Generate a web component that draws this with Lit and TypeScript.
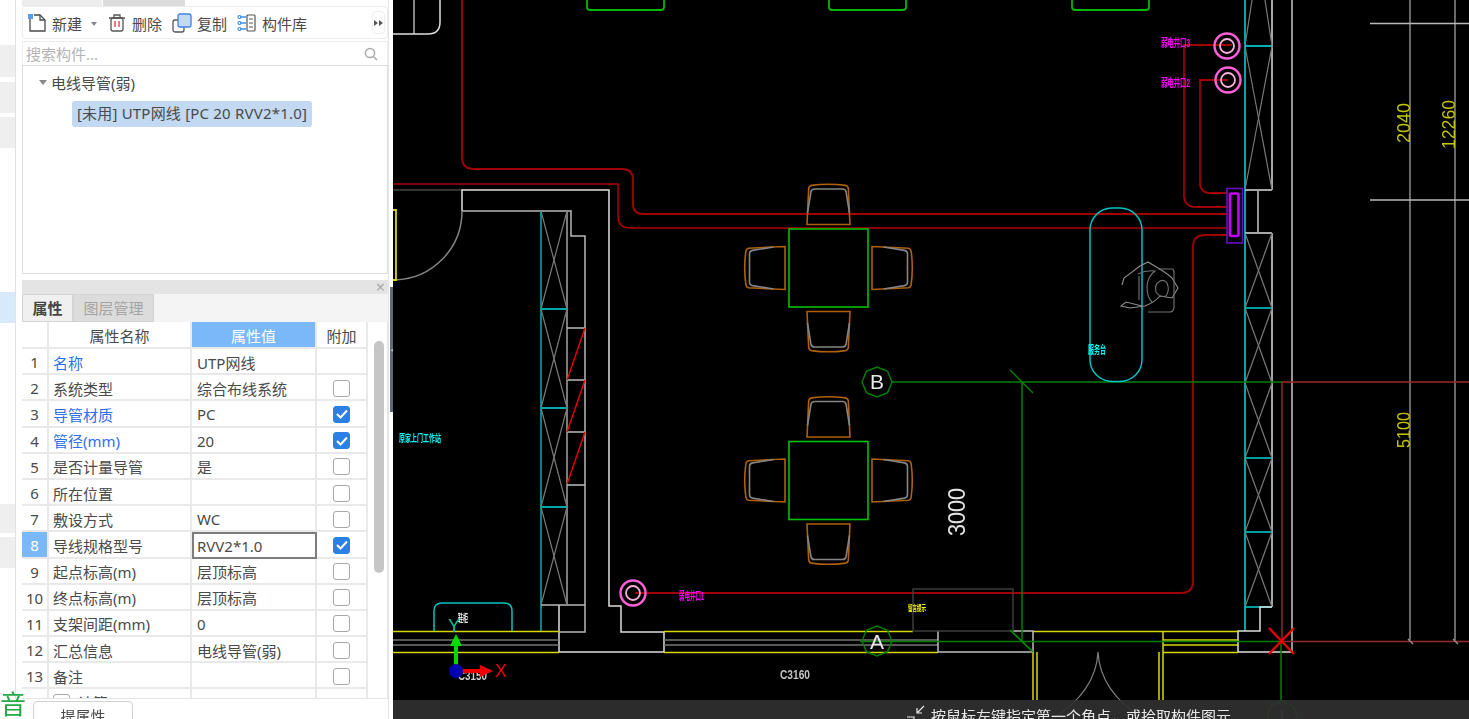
import { LitElement, html, css, svg } from 'lit';
import { customElement } from 'lit/decorators.js';
import { classMap } from 'lit/directives/class-map.js';

const rows = [
  { name: '名称', value: 'UTP网线', link: true, check: null },
  { name: '系统类型', value: '综合布线系统', check: false },
  { name: '导管材质', value: 'PC', link: true, check: true },
  { name: '管径(mm)', value: '20', link: true, check: true },
  { name: '是否计量导管', value: '是', check: false },
  { name: '所在位置', value: '', check: false },
  { name: '敷设方式', value: 'WC', check: false },
  { name: '导线规格型号', value: 'RVV2*1.0', active: true, check: true },
  { name: '起点标高(m)', value: '层顶标高', check: false },
  { name: '终点标高(m)', value: '层顶标高', check: false },
  { name: '支架间距(mm)', value: '0', check: false },
  { name: '汇总信息', value: '电线导管(弱)', check: false },
  { name: '备注', value: '', check: false },
];

const WHITE = '#dedede';
const RED = '#a00000';
const YELLOW = '#d8d800';
const TEAL = '#00dcdc';
const GREEN = '#008000';

const line = (x1: number, y1: number, x2: number, y2: number, c: string, w = 1.5) =>
  svg`<line x1=${x1} y1=${y1} x2=${x2} y2=${y2} stroke=${c} stroke-width=${w}></line>`;

const path = (d: string, c: string, w = 1.5) =>
  svg`<path d=${d} fill="none" stroke=${c} stroke-width=${w}></path>`;

// window bay with its diagonal cross
const bay = (x1: number, x2: number, y1: number, y2: number) => svg`
  ${line(x1, y1, x2, y2, '#7a7a7a', 1.2)}
  ${line(x2, y1, x1, y2, '#7a7a7a', 1.2)}
`;

const chair = (cx: number, cy: number, deg: number) => svg`
  <g transform="translate(${cx} ${cy}) rotate(${deg})">
    ${path('M-21.5 -43.5H21.5L19.8 -80Q19.4 -82 17 -82.6Q0 -85 -17 -82.6Q-19.4 -82 -19.8 -80Z', '#b06008', 1.6)}
    ${path('M-21 -55L-17.6 -76Q-17 -79 -14 -79H14Q17 -79 17.6 -76L21 -55', '#858585', 1.6)}
  </g>
`;

const table = (cx: number, cy: number) => svg`
  <rect x=${cx - 39.5} y=${cy - 39} width="79" height="78" fill="none" stroke="#00c000" stroke-width="1.6"></rect>
  ${[0, 90, 180, 270].map((d) => chair(cx, cy, d))}
`;

const socket = (cx: number, cy: number) => svg`
  <circle cx=${cx} cy=${cy} r="12.5" fill="none" stroke="#ff5fd8" stroke-width="2.4"></circle>
  <circle cx=${cx} cy=${cy} r="7" fill="none" stroke="#f6b0dc" stroke-width="1.8"></circle>
`;

const label = (x: number, y: number, t: string, c: string, len: number, size = 10) => svg`
  <text x=${x} y=${y} fill=${c} font-size=${size} font-weight="700" textLength=${len} lengthAdjust="spacingAndGlyphs" class="cad">${t}</text>
`;

const dim = (x: number, y: number, t: string, c: string, size: number, len: number) => svg`
  <text transform="translate(${x} ${y}) rotate(-90)" fill=${c} font-size=${size} textLength=${len} lengthAdjust="spacingAndGlyphs" class="cad">${t}</text>
`;

const octagon = (cx: number, cy: number, r: number) => {
  const pts = [...Array(8)].map((_, i) => {
    const a = (Math.PI / 4) * i;
    return `${cx + r * Math.cos(a)},${cy + r * Math.sin(a)}`;
  });
  return svg`<polygon points=${pts.join(' ')} fill="none" stroke="#008000" stroke-width="1.4"></polygon>`;
};

@customElement('app-root')
export class AppRoot extends LitElement {
  static styles = css`
    :host {
      display: block;
      width: 1469px;
      height: 719px;
      overflow: hidden;
      font-family: 'Noto Sans', 'Noto Sans CJK SC', sans-serif;
      font-size: 15px;
      color: #4a4a4a;
    }
    .shell {
      display: grid;
      grid-template-columns: 393px 1fr;
      height: 719px;
      filter: blur(0.4px);
    }
    .side {
      position: relative;
      display: grid;
      grid-template-columns: 16px 372px 5px;
      grid-template-rows: 699px 20px;
      background: #fff;
    }

    .rail {
      display: flex;
      flex-direction: column;
      border-right: 1px solid #e2e2e2;
    }
    .rail div {
      flex: none;
    }
    .rail .g {
      background: #efefef;
    }

    .panel {
      padding-left: 6px;
      display: flex;
      flex-direction: column;
      min-width: 0;
    }
    .top-tabs {
      height: 6px;
      display: flex;
      gap: 1px;
      flex: none;
    }
    .top-tabs i {
      width: 80px;
      background: #ededed;
    }
    .top-tabs i + i {
      width: 82px;
      background: #dcdcdc;
    }
    .toolbar {
      flex: none;
      height: 33px;
      display: flex;
      align-items: center;
      border: 1px solid #ececec;
      border-radius: 4px;
      box-sizing: border-box;
      padding-left: 4px;
      white-space: nowrap;
    }
    .toolbar svg {
      flex: none;
    }
    .toolbar span {
      margin-left: 5px;
      padding-top: 2px;
      width: 30px;
    }
    .toolbar span.gap {
      margin-right: 10px;
    }
    .toolbar span.trash {
      margin-left: 6px;
    }
    .toolbar span.wide {
      width: 45px;
    }
    .caret {
      width: 0;
      height: 0;
      margin: 2px 11px 0 9px;
      border: 3px solid transparent;
      border-top: 4px solid #888;
      border-bottom: 0;
    }
    .more {
      margin-left: auto;
      margin-right: 2px;
      width: 13px;
      height: 23px;
      border: 1px solid #eee;
      border-radius: 4px;
      display: flex;
      align-items: center;
      justify-content: center;
      box-sizing: border-box;
    }
    .search {
      flex: none;
      margin-top: 2px;
      height: 24px;
      display: flex;
      align-items: center;
      justify-content: space-between;
      padding: 0 9px 0 3px;
      border: 1px solid #ededed;
      border-bottom: 0;
      color: #b4b4b4;
      box-sizing: border-box;
    }
    .tree {
      flex: none;
      height: 209px;
      box-sizing: border-box;
      border: 1px solid #dedede;
      padding: 4px 0 0 16px;
    }
    .node {
      display: flex;
      align-items: center;
      height: 24px;
      gap: 4px;
    }
    .node b {
      width: 0;
      height: 0;
      border: 4.5px solid transparent;
      border-top: 5px solid #888;
      border-bottom: 0;
    }
    .picked {
      margin: 7px 0 0 33px;
      width: 240px;
      height: 26px;
      line-height: 25px;
      border-radius: 3px;
      background: #c2d9f1;
      text-align: center;
      white-space: nowrap;
      letter-spacing: 0.2px;
    }
    .prop-head {
      flex: none;
      margin-top: 6px;
      height: 14px;
      background: #e4e4e4;
      color: #a8a8a8;
      font-size: 16px;
      line-height: 14px;
      text-align: right;
      padding-right: 3px;
    }
    .prop-tabs {
      flex: none;
      height: 28px;
      display: flex;
      box-sizing: border-box;
      background: #f4f4f4;
    }
    .prop-tabs div {
      width: 51px;
      line-height: 27px;
      text-align: center;
      background: #f0f0f0;
      border: 1px solid #d4d4d4;
      font-weight: 700;
      color: #444;
      box-sizing: border-box;
    }
    .prop-tabs div + div {
      width: 81px;
      background: #dcdcdc;
      color: #a4a4a4;
      font-weight: 400;
    }
    .props {
      flex: 1;
      min-height: 0;
      overflow: hidden;
      display: grid;
      grid-template-columns: 346px 20px;
      border-right: 1px solid #e4e4e4;
      border-bottom: 1px solid #e4e4e4;
    }
    .sheet {
      display: grid;
      grid-template-columns: 27px 143px 125px 51px;
      grid-template-rows: 27px;
      grid-auto-rows: 26.2px;
      overflow: hidden;
    }
    .cell {
      display: flex;
      align-items: center;
      padding: 2px 0 0 4px;
      box-sizing: border-box;
      border-right: 2px solid #e9e9e9;
      border-bottom: 2px solid #e9e9e9;
      white-space: nowrap;
    }
    .cell.val {
      padding-left: 5px;
    }
    .cell.num,
    .cell.add,
    .cell.hd {
      justify-content: center;
      padding: 2px 0 0;
    }
    .cell.sel {
      background: #7ab8f9;
      color: #fff;
    }
    .cell.link {
      color: #2f6fe8;
    }
    .cell.edit {
      border: 2px solid #7d7d7d;
      background: #fff;
      padding-left: 3px;
    }
    .box {
      width: 17px;
      height: 17px;
      box-sizing: border-box;
      border: 1.5px solid #a8a8a8;
      border-radius: 3px;
      display: flex;
      align-items: center;
      justify-content: center;
    }
    .box.on {
      background: #2c7fe4;
      border-color: #2c7fe4;
    }
    .track {
      padding: 19px 0 0 6px;
    }
    .thumb {
      width: 10px;
      height: 232px;
      border-radius: 5px;
      background: #c6c6c6;
    }
    .splitter {
      grid-row: 1 / 3;
      grid-column: 3;
      padding-top: 287px;
      border-left: 1px solid #e6e6e6;
      box-sizing: border-box;
    }
    .grip {
      height: 125px;
      background: #5f6b78;
      margin-left: 1px;
      display: flex;
      align-items: center;
      color: #b8bec4;
      font-size: 8px;
    }
    .foot {
      grid-column: 1 / 3;
      display: flex;
      overflow: hidden;
    }
    .voice {
      position: absolute;
      left: 0;
      top: 689px;
      color: #25a845;
      font-size: 26px;
      line-height: 30px;
    }
    .btn {
      margin: 2px 0 0 33px;
      width: 100px;
      height: 30px;
      box-sizing: border-box;
      border: 1px solid #d2d2d2;
      border-radius: 4px;
      text-align: center;
      line-height: 29px;
    }

    .canvas {
      position: relative;
      background: #000;
      overflow: hidden;
    }
    .canvas > svg {
      display: block;
      width: 1076px;
      height: 719px;
    }
    .cad {
      font-family: 'Liberation Sans', 'Noto Sans CJK SC', sans-serif;
    }
    .status {
      position: absolute;
      left: 0;
      right: 0;
      bottom: 0;
      height: 19px;
      background: rgba(48, 48, 48, 0.92);
      color: #e8e8e8;
      font-size: 15px;
      overflow: hidden;
      display: flex;
      padding-left: 513px;
      gap: 5px;
      line-height: 20px;
      white-space: nowrap;
    }
    .status span {
      padding-top: 6px;
    }
    .status svg {
      flex: none;
      margin-top: 5px;
    }
  `;

  private toolbar() {
    return html`
      <div class="toolbar">
        <svg width="20" height="20" viewBox="0 0 20 20" fill="none" stroke="#4a4a4a" stroke-width="1.3">
          <path d="M3 5V18H18V7L13 2H7" />
          <path d="M13 2V7H18" />
          <rect x="1" y="1" width="5" height="5" fill="#5a9cf0" stroke="none" />
        </svg>
        <span>新建</span>
        <i class="caret"></i>
        <svg width="18" height="20" viewBox="0 0 18 20" fill="none" stroke="#555" stroke-width="1.3">
          <path d="M1 5H17M6 5V2H12V5" />
          <rect x="3" y="5" width="12" height="13" rx="2" />
          <path d="M7 8V14M11 8V14" stroke="#e8504a" stroke-width="1.5" />
        </svg>
        <span class="trash gap">删除</span>
        <svg width="20" height="20" viewBox="0 0 20 20" fill="none" stroke="#555" stroke-width="1.3">
          <rect x="1" y="7" width="11" height="12" rx="2" />
          <rect x="6" y="1" width="13" height="13" rx="2" fill="#c2d9f6" stroke="#3f82e0" />
        </svg>
        <span class="gap">复制</span>
        <svg width="20" height="20" viewBox="0 0 20 20" fill="none" stroke="#555" stroke-width="1.2">
          <rect x="10" y="2" width="8" height="16" rx="1" />
          <path d="M12 6H16M12 10H16M12 14H16" />
          <path d="M3 4H9M3 10H9M3 16H9" stroke="#3f90e8" stroke-width="1.3" />
          <circle cx="2.5" cy="4" r="1.5" stroke="#3f90e8" />
          <circle cx="2.5" cy="10" r="1.5" stroke="#3f90e8" />
          <circle cx="2.5" cy="16" r="1.5" stroke="#3f90e8" />
        </svg>
        <span class="wide">构件库</span>
        <div class="more">
          <svg width="9" height="6" viewBox="0 0 9 6" fill="#555">
            <path d="M0 0L4 3L0 6ZM5 0L9 3L5 6Z" />
          </svg>
        </div>
      </div>
    `;
  }

  private sheet() {
    return html`
      <div class="sheet">
        <div class="cell hd"></div>
        <div class="cell hd">属性名称</div>
        <div class="cell hd sel">属性值</div>
        <div class="cell hd">附加</div>
        ${rows.map(
          (r, i) => html`
            <div class="cell num ${classMap({ sel: !!r.active })}">${i + 1}</div>
            <div class="cell ${classMap({ link: !!r.link })}">${r.name}</div>
            <div class="cell val ${classMap({ edit: !!r.active })}">${r.value}</div>
            <div class="cell add">
              ${r.check === null
                ? ''
                : html`<div class="box ${classMap({ on: !!r.check })}">
                    ${r.check
                      ? html`<svg width="12" height="10" viewBox="0 0 12 10" fill="none" stroke="#fff" stroke-width="2">
                          <path d="M1 5L4.5 8.5L11 1.5" />
                        </svg>`
                      : ''}
                  </div>`}
            </div>
          `
        )}
        <div class="cell num"></div>
        <div class="cell"><div class="box"></div>&nbsp;&nbsp;计算</div>
        <div class="cell"></div>
        <div class="cell add"></div>
      </div>
    `;
  }

  private drawing() {
    return svg`
      <!-- top-left door + furniture -->
      ${path('M393 34H428Q440 34 440 22V0', WHITE)}
      ${line(414, 0, 414, 34, WHITE, 1.2)}
      ${[587, 829, 1072].map((x) => path(`M${x} 0V7Q${x} 10 ${x + 3} 10H${x + 74}Q${x + 77} 10 ${x + 77} 7V0`, '#00b800', 1.8))}

      <!-- red conduits -->
      ${path('M462 0V157Q462 169 474 169H622Q633 169 633 180V204Q633 214 643 214H1227', RED, 1.9)}
      ${path('M393 184H618V216Q618 228 630 228H1227', '#b00000', 1.5)}
      ${path('M1232 45H1184V195Q1184 207 1196 207H1227', RED, 1.8)}
      ${path('M1228 80H1200V183Q1200 193 1210 193H1227', RED, 1.8)}
      ${path('M1227 235H1205Q1193 235 1193 247V581Q1193 593 1181 593H635', RED, 1.9)}

      <!-- left wall -->
      ${line(393, 190, 462, 190, '#666', 1.2)}
      ${path('M462 211V190H609V606H621V632H664V652H559V605', WHITE)}
      ${path('M462 211H571V236H585V632H559', '#b8b8b8')}
      ${path('M462 211A69 69 0 0 1 395 280', '#858585')}
      ${path('M393 210H396V280H393', YELLOW, 1.8)}
      ${line(541, 211, 541, 632, '#00b0b8')}
      ${line(567, 211, 567, 605, '#a4a4a4')}
      ${line(541, 605, 585, 605, '#b8b8b8')}
      ${[[211, 309], [309, 408], [408, 507], [507, 605]].map(([a, b]) => bay(541, 567, a, b))}
      ${[309, 408, 507].map((y) => line(541, y, 567, y, '#00a8ac', 2))}
      ${[328, 380, 432, 485].map((y) => line(567, y, 585, y, '#bcbcbc'))}
      ${[380, 432, 484].map((y) => line(567, y, 585, y - 52, '#f00000', 1.4))}

      <!-- right wall -->
      ${line(1245, 0, 1245, 631, TEAL)}
      ${line(1272, 0, 1272, 190, WHITE)}
      ${line(1272, 233, 1272, 607, WHITE)}
      ${line(1292, 0, 1292, 652, '#a8a8a8', 1.8)}
      ${line(1245, 190, 1272, 190, WHITE)}
      ${line(1245, 233, 1272, 233, WHITE)}
      ${line(1258, 190, 1258, 233, '#a4a4a4', 1.8)}
      ${bay(1245, 1272, 46, 190)}
      ${path('M1252 0L1245 46M1265 0L1272 46', '#7a7a7a', 1.2)}
      ${line(1245, 46, 1272, 46, '#00c4c8', 1.8)}
      ${[[233, 308], [308, 383], [383, 458], [458, 532], [532, 607]].map(([a, b]) => bay(1245, 1272, a, b))}
      ${[308, 458, 532, 607].map((y) => line(1245, y, 1272, y, '#00c4c8', 1.6))}
      ${path('M1272 607H1260V631H1238V652H1292', WHITE)}

      <!-- dimension lines -->
      ${line(1410, 0, 1410, 640, '#949494', 1.4)}
      ${line(1455, 0, 1455, 640, '#949494', 1.4)}
      ${line(1370, 23.5, 1469, 23.5, '#b8b8b8', 1.4)}
      ${line(1370, 200, 1469, 200, '#b8b8b8', 1.4)}
      ${path('M1469 382H1282V641.5H1469', '#982c2c', 1.4)}
      ${path('M1408 639L1413 644M1453 639L1458 644', '#949494', 1.4)}
      ${dim(1409.5, 143, '2040', '#c4c400', 19, 40)}
      ${dim(1454.5, 149, '12260', '#c4c400', 19, 49)}
      ${dim(1409.5, 448, '5100', '#c4c400', 19, 36)}
      ${dim(965, 536, '3000', '#e4e4e4', 24, 48)}

      <!-- bottom wall -->
      ${[[393, 559], [664, 913], [1033, 1238]].map(([a, b]) => line(a, 631.5, b, 631.5, YELLOW))}
      ${[[393, 559], [664, 938], [1163, 1238]].map(([a, b]) => line(a, 652.5, b, 652.5, YELLOW))}
      ${[[393, 559], [664, 938]].map(([a, b]) => svg`${line(a, 640, b, 640, '#747474', 1.6)}${line(a, 645, b, 645, '#747474', 1.6)}`)}
      ${line(1163, 640, 1238, 640, YELLOW)}
      ${line(1163, 645, 1238, 645, YELLOW)}
      ${line(1163, 631, 1163, 652, YELLOW)}
      ${path('M938 631V652H1033V631H1013', '#c0c0c0')}
      <rect x="913" y="589" width="100" height="42" fill="none" stroke="#404040" stroke-width="1.4"></rect>
      ${path('M1033 652V700M1037 652V700', YELLOW, 1.5)}
      ${path('M1159 652V700M1163 652V700', YELLOW, 1.5)}
      ${path('M1098 652Q1096 692 1052 719M1098 652Q1100 692 1144 719', '#808080', 1.2)}
      ${path('M434 631V611Q434 603 442 603H504Q512 603 512 611V631', '#00c4c8', 1.5)}

      <!-- axis lines -->
      ${line(892, 382, 1282, 382, GREEN)}
      ${line(1022, 382, 1022, 641, GREEN)}
      ${line(1010, 370, 1033, 393, GREEN)}
      ${line(1010, 630, 1033, 652, '#009800', 1.6)}
      ${line(860, 641.5, 1282, 641.5, GREEN, 1.6)}
      ${line(1281, 641, 1281, 700, GREEN)}
      ${octagon(877, 382, 15)}
      ${octagon(877, 641, 15)}
      <text x="877" y="389" text-anchor="middle" fill="#e8e8e8" font-size="21" class="cad">B</text>
      <text x="877" y="649" text-anchor="middle" fill="#e8e8e8" font-size="21" class="cad">A</text>
      ${octagon(1282, 716, 15)}
      <text x="1282" y="722" text-anchor="middle" fill="#777" font-size="16" class="cad">1</text>

      ${path('M1269 628L1294 654M1294 628L1269 654', '#f00000', 2.2)}

      <!-- furniture and devices -->
      ${table(828.5, 268)}
      ${table(828.5, 480.5)}
      <rect x="1090" y="208" width="52" height="173.5" rx="22" fill="none" stroke="#00c4c8" stroke-width="1.5"></rect>
      ${path('M1122 285L1124 278Q1132 272 1140 266L1148 262L1158 268Q1168 274 1172 278L1178 288L1172 298L1160 296Q1155 302 1145 306L1130 308L1121 306L1126 302L1142 306', '#8e8e8e', 1.1)}
      ${path('M1158 269H1172Q1174 269 1174 272V306Q1174 312 1170 312H1148', '#747474', 1.1)}
      ${path('M1138 274Q1146 270 1155 271Q1148 276 1147 286Q1147 298 1152 302M1160 281Q1154 284 1156 292Q1160 298 1166 296Q1170 290 1167 283Q1164 279 1160 281M1139 276V300', '#747474', 1.1)}
      ${socket(1227, 46)}
      ${socket(1228, 80)}
      ${socket(633, 593)}
      <rect x="1227" y="188.5" width="15.5" height="54.5" fill="none" stroke="#6a10c0" stroke-width="1.6"></rect>
      <rect x="1230" y="193.5" width="8.5" height="42.5" rx="1.5" fill="none" stroke="#c400ff" stroke-width="2.6"></rect>

      <!-- tiny labels -->
      ${label(1161, 47, '弱电井口3', '#ff00ff', 29, 11)}
      ${label(1161, 87, '弱电井口2', '#ff00ff', 29, 11)}
      ${label(679, 600, '弱电井口1', '#ff00ff', 25, 11)}
      ${label(399, 442, '原家上门工作站', '#00ffff', 42)}
      ${label(1088, 354, '服务台', '#00ffff', 18, 11)}
      ${label(908, 611, '留言提示', '#ffff00', 18, 8)}
      ${label(458, 622, '鞋柜', '#f0f0f0', 10)}
      ${label(458, 680, 'C3150', '#cfcfcf', 29, 12)}
      ${label(780, 679, 'C3160', '#c4c4c4', 30, 12)}

      <!-- ucs axes -->
      ${line(456, 671, 456, 645, '#00d800', 4)}
      <path d="M456 634L462 646H450Z" fill="#00e000"></path>
      <text x="448" y="632" fill="#00c8a0" font-size="18" class="cad">Y</text>
      ${line(456, 671, 482, 671, '#f00000', 4)}
      <path d="M493 671L480 665V677Z" fill="#f00000"></path>
      <circle cx="456" cy="671" r="7" fill="#0000b0"></circle>
      <text x="495" y="677" fill="#f00000" font-size="18" class="cad">X</text>
    `;
  }

  render() {
    const stripes = [
      [5, 0],
      [33, 0],
      [7, 0],
      [32, 1],
      [5, 0],
      [31, 1],
      [4, 0],
      [31, 1],
    ];
    return html`
      <div class="shell">
        <div class="side">
          <div class="rail">
            ${stripes.map(([h, g]) => html`<div class=${g ? 'g' : ''} style="height:${h}px"></div>`)}
            <div style="height:144px"></div>
            <div style="height:31px;background:#d8e9fb"></div>
            <div style="height:181px"></div>
            <div class="g" style="height:29px"></div>
            <div style="height:4px"></div>
            <div class="g" style="height:31px"></div>
          </div>
          <div class="panel">
            <div class="top-tabs"><i></i><i></i></div>
            ${this.toolbar()}
            <div class="search">
              <span>搜索构件...</span>
              <svg width="14" height="14" viewBox="0 0 14 14" fill="none" stroke="#aaa" stroke-width="1.5">
                <circle cx="6" cy="6" r="4.6" />
                <path d="M9.5 9.5L13 13" />
              </svg>
            </div>
            <div class="tree">
              <div class="node"><b></b>电线导管(弱)</div>
              <div class="picked">[未用] UTP网线 [PC 20 RVV2*1.0]</div>
            </div>
            <div class="prop-head">×</div>
            <div class="prop-tabs"><div>属性</div><div>图层管理</div></div>
            <div class="props">
              ${this.sheet()}
              <div class="track"><div class="thumb"></div></div>
            </div>
          </div>
          <div class="splitter"><div class="grip">◀</div></div>
          <div class="foot">
            <div class="btn">提属性</div>
          </div>
          <div class="voice">音</div>
        </div>
        <div class="canvas">
          <svg viewBox="393 0 1076 719">${this.drawing()}</svg>
          <div class="status">
            <svg width="20" height="16" viewBox="0 0 20 16" fill="none" stroke="#e8e8e8" stroke-width="1.2">
              <path d="M18 1L11 8M11 3V8H16M1 12H8V16" />
            </svg>
            <span>按鼠标左键指定第一个角点，或拾取构件图元</span>
          </div>
        </div>
      </div>
    `;
  }
}
